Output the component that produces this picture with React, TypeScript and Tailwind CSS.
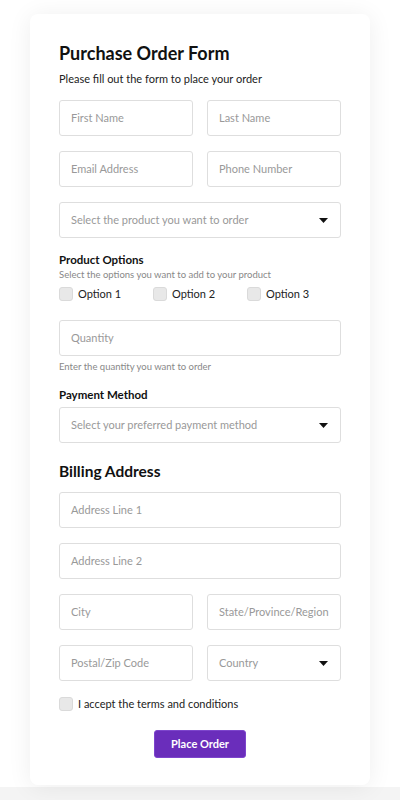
import { ReactNode } from "react";

const font = { fontFamily: 'Lato, "Open Sans", sans-serif' };

const Caret = () => (
  <svg width="9" height="5" viewBox="0 0 9 5" className="shrink-0">
    <path d="M0 0h9L4.5 5z" fill="#111" />
  </svg>
);

const Field = ({ placeholder }: { placeholder: string }) => (
  <div className="flex h-[36px] items-center rounded-[3px] border border-[#dedede] bg-white px-[11px] text-[11px] text-[#999] whitespace-nowrap overflow-hidden">
    {placeholder}
  </div>
);

const Select = ({ placeholder }: { placeholder: string }) => (
  <div className="flex h-[36px] items-center justify-between rounded-[3px] border border-[#dedede] bg-white pl-[11px] pr-[12px] text-[11px] text-[#999]">
    <span>{placeholder}</span>
    <Caret />
  </div>
);

const Check = ({ children }: { children: ReactNode }) => (
  <label className="flex items-center gap-[5px] text-[11px] text-[#222]">
    <span className="h-[14px] w-[14px] rounded-[3px] border border-[#dadada] bg-[#e8e8e8]" />
    {children}
  </label>
);

export default function App() {
  return (
    <div className="min-h-[800px] bg-[#f4f4f4]" style={font}>
      <div className="bg-white px-[30px] pt-[14px] pb-[2px]">
        <form className="rounded-[8px] bg-white px-[29px] pt-[27px] pb-[27px] shadow-[0_2px_24px_rgba(0,0,0,0.07)]">
          {/* Header */}
          <h1 className="text-[18px] font-bold leading-[24px] text-[#111]">Purchase Order Form</h1>
          <p className="mt-[5px] text-[11px] leading-[18px] text-[#222]">
            Please fill out the form to place your order
          </p>

          {/* Contact */}
          <div className="mt-[12px] grid grid-cols-2 gap-x-[14px] gap-y-[15px]">
            <Field placeholder="First Name" />
            <Field placeholder="Last Name" />
            <Field placeholder="Email Address" />
            <Field placeholder="Phone Number" />
          </div>
          <div className="mt-[15px]">
            <Select placeholder="Select the product you want to order" />
          </div>

          {/* Product options */}
          <h3 className="mt-[14px] text-[11.5px] font-bold leading-[16px] text-[#111]">Product Options</h3>
          <p className="text-[9.5px] leading-[14px] text-[#888]">
            Select the options you want to add to your product
          </p>
          <div className="mt-[3px] grid grid-cols-3 leading-[18px]">
            <Check>Option 1</Check>
            <Check>Option 2</Check>
            <Check>Option 3</Check>
          </div>

          <div className="mt-[17px]">
            <Field placeholder="Quantity" />
          </div>
          <p className="mt-[4px] text-[9.5px] leading-[14px] text-[#888]">Enter the quantity you want to order</p>

          {/* Payment */}
          <h3 className="mt-[13px] text-[11.5px] font-bold leading-[16px] text-[#111]">Payment Method</h3>
          <div className="mt-[4px]">
            <Select placeholder="Select your preferred payment method" />
          </div>

          {/* Billing */}
          <h2 className="mt-[17px] text-[15.5px] font-bold leading-[22px] text-[#111]">Billing Address</h2>
          <div className="mt-[10px] flex flex-col gap-[15px]">
            <Field placeholder="Address Line 1" />
            <Field placeholder="Address Line 2" />
          </div>
          <div className="mt-[15px] grid grid-cols-2 gap-x-[14px] gap-y-[15px]">
            <Field placeholder="City" />
            <Field placeholder="State/Province/Region" />
            <Field placeholder="Postal/Zip Code" />
            <Select placeholder="Country" />
          </div>

          <div className="mt-[14px] leading-[18px]">
            <Check>I accept the terms and conditions</Check>
          </div>

          <div className="mt-[17px] flex justify-center">
            <button
              type="button"
              className="h-[28px] w-[92px] rounded-[3px] border border-[#7d45cc] bg-[#6a2dbb] text-[11px] font-bold text-white"
            >
              Place Order
            </button>
          </div>
        </form>
      </div>
    </div>
  );
}
